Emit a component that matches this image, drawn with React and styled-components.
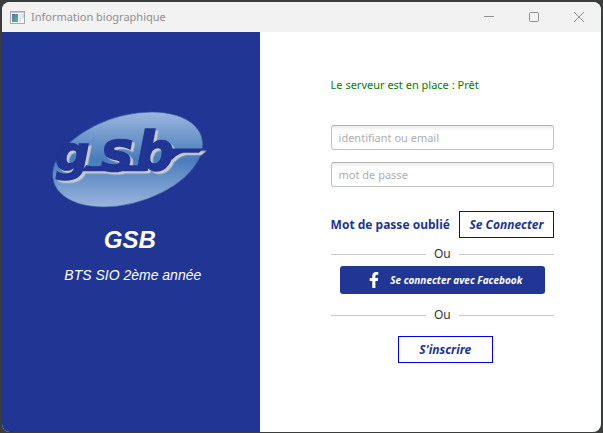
import React from "react";
import styled, { createGlobalStyle } from "styled-components";
import { FaFacebookF } from "react-icons/fa";

const navy = "#213594";

const GlobalStyle = createGlobalStyle`
  *, *::before, *::after { box-sizing: border-box; }
  body { margin: 0; background: #3b3d3d; font: 12px/16px "Noto Sans", sans-serif; color: #333; }
  button, input { font: inherit; margin: 0; }
`;

const Desktop = styled.div`
  display: flex;
  min-height: 100vh;
  padding: 2px 2px 1px;
`;

const Window = styled.div`
  flex: 1;
  display: flex;
  flex-direction: column;
  overflow: hidden;
  border-radius: 8px;
  background: #fff;
`;

const TitleBar = styled.header`
  display: flex;
  align-items: center;
  height: 30px;
  padding-left: 8px;
  background: #f2f2f2;
  color: #8f8f8f;
`;

const Title = styled.h1`
  flex: 1;
  margin: 0 0 0 6px;
  font-size: 11px;
  font-weight: 400;
`;

const WindowButton = styled.button`
  display: grid;
  place-items: center;
  width: 45px;
  height: 30px;
  padding: 0;
  border: 0;
  background: none;
  color: #8f8f8f;
`;

const Content = styled.main`
  flex: 1;
  display: grid;
  grid-template-columns: 43fr 57fr;
`;

const BrandPanel = styled.section`
  display: flex;
  flex-direction: column;
  align-items: center;
  padding: 79px 2px 0 0;
  background: ${navy};
  color: #fff;
  font-family: "Liberation Sans", sans-serif;
  font-style: italic;
`;

const BrandName = styled.h2`
  margin: 18px 0 0;
  font-size: 24px;
  line-height: 28px;
`;

const BrandSubtitle = styled.p`
  margin: 12px 0 0;
  padding-left: 6px;
  font-size: 14px;
  line-height: 18px;
`;

const LoginForm = styled.form`
  display: flex;
  flex-direction: column;
  padding: 45px 47px 0 71px;
`;

const Status = styled.p`
  margin: 0 0 32px;
  color: #008000;
  font-size: 11px;
`;

const Field = styled.input`
  width: 100%;
  height: 25px;
  margin-bottom: 12px;
  padding: 0 7px;
  border: 1px solid #c3c3c3;
  border-top-color: #b3b3b3;
  border-radius: 3px;
  background: linear-gradient(#ededed, #fff 5px);
  font-size: 11px;
  &::placeholder { color: #aeaeae; opacity: 1; }
`;

const Row = styled.div`
  display: flex;
  align-items: center;
  justify-content: space-between;
  margin-top: 12px;
`;

const ForgotLink = styled.a`
  color: ${navy};
  font-weight: 700;
  text-decoration: none;
`;

const OutlineButton = styled.button`
  width: 95px;
  height: 27px;
  padding: 0;
  border: 1px solid #0000f0;
  background: #fff;
  color: ${navy};
  font-weight: 700;
  font-style: italic;
`;

const Divider = styled.div`
  display: flex;
  align-items: center;
  gap: 8px;
  margin: ${(p) => p.$margin};
  &::before, &::after { content: ""; flex: 1; height: 1px; background: #c8c8c8; }
`;

const FacebookButton = styled.button`
  display: flex;
  align-items: center;
  justify-content: center;
  gap: 8px;
  height: 28px;
  margin: 0 9px;
  padding: 0 0 0 4px;
  border: 0;
  border-radius: 3px;
  background: ${navy};
  color: #fff;
  font-size: 10px;
  font-weight: 700;
  font-style: italic;
`;

const SignUpRow = styled.div`
  display: flex;
  justify-content: center;
  padding-left: 6px;
`;

const Wordmark = styled.g`
  fill: ${navy};
  stroke: ${navy};
  stroke-width: 5px;
  font-family: "DejaVu Sans", sans-serif;
  font-weight: 700;
  font-style: oblique;
  filter: drop-shadow(8px 7px 0 #c7cad0);
`;

function GsbLogo() {
  return (
    <svg width="156" height="97" viewBox="36 33 468 291" role="img" aria-label="gsb">
      <defs>
        <linearGradient id="oval" x1="0" y1="36" x2="0" y2="321" gradientUnits="userSpaceOnUse">
          <stop offset="0" stopColor="#9cb6de" />
          <stop offset="0.5" stopColor="#487cbc" />
          <stop offset="1" stopColor="#9ab5dd" />
        </linearGradient>
      </defs>
      <path
        d="M335 36 A232 131 -17 0 1 191 321 A232 131 -17 0 1 335 36Z"
        fill="url(#oval)"
        stroke="#355c9d"
        strokeWidth="2"
      />
      <Wordmark>
        <text x="46" y="211" fontSize="144">g</text>
        <text x="182" y="211" fontSize="164">s</text>
        <text x="288" y="211" fontSize="160">b</text>
        <path d="M140 198 Q165 205 190 198 H322 L314 211 H130Z" />
        <path d="M376 161 Q384 148 404 148 H485 L476 156 H430 Q414 158 396 176Z" />
      </Wordmark>
    </svg>
  );
}

function AppIcon() {
  return (
    <svg width="15" height="13" viewBox="0 0 15 13" aria-hidden="true">
      <defs>
        <linearGradient id="app" x1="0" y1="0" x2="1" y2="1">
          <stop offset="0" stopColor="#4f78a8" />
          <stop offset="1" stopColor="#62b48b" />
        </linearGradient>
      </defs>
      <rect x="0.5" y="0.5" width="14" height="12" fill="#f4f5f8" stroke="#a5a8ad" />
      <path d="M1 1.5H14" stroke="#c6c9ce" />
      <rect x="2" y="3" width="6" height="8" fill="url(#app)" />
      <rect x="9" y="3" width="2" height="8" fill="#dfe4ec" />
      <rect x="12" y="3" width="2" height="4" fill="#cbdde5" />
    </svg>
  );
}

export default function App() {
  return (
    <>
      <GlobalStyle />
      <Desktop>
        <Window>
          <TitleBar>
            <AppIcon />
            <Title>Information biographique</Title>
            <WindowButton aria-label="Réduire">
              <svg width="10" height="10" fill="none" stroke="currentColor"><path d="M0 4.5H10" /></svg>
            </WindowButton>
            <WindowButton aria-label="Agrandir">
              <svg width="10" height="10" fill="none" stroke="currentColor"><rect x="0.5" y="0.5" width="9" height="9" rx="1" /></svg>
            </WindowButton>
            <WindowButton aria-label="Fermer">
              <svg width="10" height="10" fill="none" stroke="currentColor"><path d="M0 0L10 10M10 0L0 10" /></svg>
            </WindowButton>
          </TitleBar>
          <Content>
            <BrandPanel>
              <GsbLogo />
              <BrandName>GSB</BrandName>
              <BrandSubtitle>BTS SIO 2ème année</BrandSubtitle>
            </BrandPanel>
            <LoginForm onSubmit={(e) => e.preventDefault()}>
              <Status>Le serveur est en place : Prêt</Status>
              <Field type="text" placeholder="identifiant ou email" aria-label="identifiant ou email" />
              <Field type="password" placeholder="mot de passe" aria-label="mot de passe" />
              <Row>
                <ForgotLink href="#">Mot de passe oublié</ForgotLink>
                <OutlineButton type="submit">Se Connecter</OutlineButton>
              </Row>
              <Divider $margin="8px 0 4px">Ou</Divider>
              <FacebookButton type="button">
                <FaFacebookF size={16} />
                Se connecter avec Facebook
              </FacebookButton>
              <Divider $margin="13px 0">Ou</Divider>
              <SignUpRow>
                <OutlineButton type="button">S'inscrire</OutlineButton>
              </SignUpRow>
            </LoginForm>
          </Content>
        </Window>
      </Desktop>
    </>
  );
}
